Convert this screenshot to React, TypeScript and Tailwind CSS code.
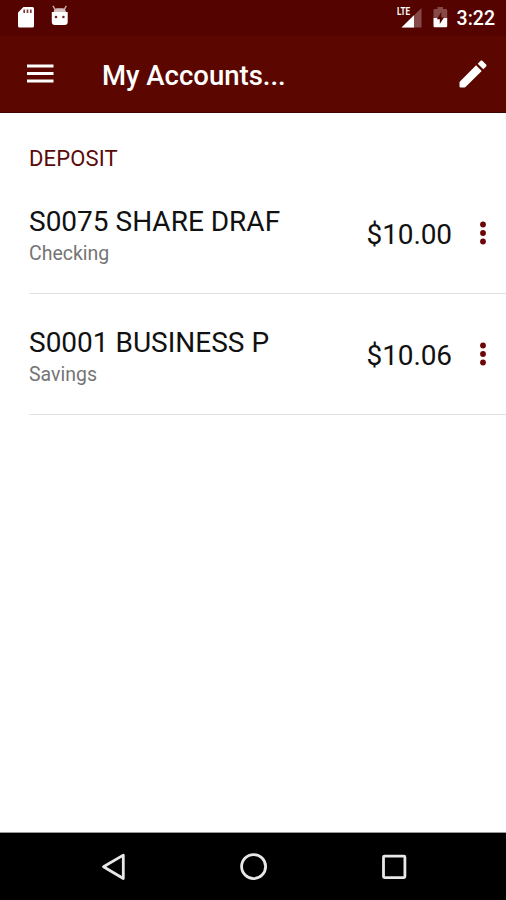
const accounts = [
  { name: 'S0075 SHARE DRAF', type: 'Checking', balance: '$10.00' },
  { name: 'S0001 BUSINESS P', type: 'Savings', balance: '$10.06' },
]

function StatusBar() {
  return (
    <div className="flex h-9 items-start bg-[#540300] pl-[18px] pr-[11px] text-white">
      {/* SD card */}
      <svg width="16" height="21" viewBox="0 0 16 21" className="mt-[7px]">
        <path d="M5.5 0H14.5Q16 0 16 1.5V19Q16 20.5 14.5 20.5H1.5Q0 20.5 0 19V5.5Z" fill="#fff" />
        <path d="M6.2 2.5V6M9.5 2.5V6M12.8 2.5V6" stroke="#7a3c3a" strokeWidth="1.7" />
      </svg>
      {/* debug droid */}
      <svg width="18" height="21" viewBox="0 0 18 21" className="ml-[17px] mt-[5px]">
        <path d="M2 .8L4.3 5M15.3 .8L13 5" stroke="#c9aead" strokeWidth="1.4" />
        <path d="M2.6 7Q3.2 3.2 6 3.2H11.5Q14.4 3.2 15 7Z" fill="#d6c0bf" />
        <path d="M.8 7H16.7V17Q16.7 20 13.7 20H3.8Q.8 20 .8 17Z" fill="#fff" />
        <circle cx="5" cy="12" r="1.3" fill="#6b2826" />
        <circle cx="12.4" cy="12" r="1.3" fill="#6b2826" />
      </svg>

      <div className="relative ml-auto mt-[7px] h-[21px] w-[26px]">
        <svg width="26" height="21" viewBox="0 0 26 21">
          <path d="M25.5 1V20.5H5.5Z" fill="#854a48" />
          <path d="M18 8.3V20.5H5.5Z" fill="#fff" />
        </svg>
        <span className="absolute left-px top-0 origin-left scale-x-[.74] bg-[#540300] text-[11px] font-bold leading-[10px]">
          LTE
        </span>
      </div>
      <svg width="15" height="21" viewBox="0 0 15 21" className="ml-[11px] mt-[7px]">
        <path d="M4.5 0H10V2H13Q14.2 2 14.2 3.2V11H.5V3.2Q.5 2 1.7 2H4.5Z" fill="#854a48" />
        <path d="M.5 11H14.2V19Q14.2 20.2 13 20.2H1.7Q.5 20.2 .5 19Z" fill="#fff" />
        <path d="M8.3 5L3.8 12.3H6.8V17L11 10.4H8.3Z" fill="#540300" />
      </svg>
      <span className="ml-[9px] mt-[7px] text-[19.5px] font-medium leading-6">3:22</span>
    </div>
  )
}

function Header() {
  return (
    <header className="flex h-[77px] items-center border-b border-[#3f0505] bg-[#5b0700] pl-[27px] pr-[15px] text-white">
      <button aria-label="Menu">
        <svg width="27" height="19" viewBox="0 0 27 19" className="-mt-px">
          <path d="M0 2H26.5M0 9.5H26.5M0 17H26.5" stroke="#fff" strokeWidth="3.2" />
        </svg>
      </button>
      <h1 className="ml-12 mt-[3px] text-[27.5px] font-medium leading-8">My Accounts...</h1>
      <button aria-label="Edit" className="ml-auto">
        <svg width="36" height="36" viewBox="0 0 24 24" fill="#fff" className="-mt-px">
          <path d="M3.3 17Q3 17.3 3 17.7V20.3Q3 21 3.7 21H6.3Q6.7 21 7 20.7L17.81 9.94l-3.75-3.75zM20.71 7.04c.39-.39.39-1.02 0-1.41l-2.34-2.34c-.39-.39-1.02-.39-1.41 0l-1.83 1.83 3.75 3.75 1.83-1.83z" />
        </svg>
      </button>
    </header>
  )
}

function AccountRow({ name, type, balance }: (typeof accounts)[number]) {
  return (
    <li className="flex h-[121px] items-start border-b border-[#e2e2e2] pr-[19px]">
      <div className="mt-[33px]">
        <div className="text-[28px] leading-8 text-[#111]">{name}</div>
        <div className="text-[19.5px] leading-8 text-[#757575]">{type}</div>
      </div>
      <div className="ml-auto mt-[46px] text-[28px] leading-8 tracking-[-.1px] text-[#111]">{balance}</div>
      <button aria-label="More" className="ml-[27px] mt-[48px]">
        <svg width="8" height="24" viewBox="0 0 8 24" fill="#6b0508">
          <circle cx="4" cy="3.5" r="2.9" />
          <circle cx="4" cy="12" r="2.9" />
          <circle cx="4" cy="20.5" r="2.9" />
        </svg>
      </button>
    </li>
  )
}

function NavBar() {
  return (
    <nav className="h-[67px] bg-black">
      <svg width="506" height="67" viewBox="0 0 506 67" fill="none" stroke="#e8e8e8" strokeWidth="2.8" strokeLinejoin="round">
        <path d="M103.5 33.8L123.3 22.1V45.5Z" />
        <circle cx="253.6" cy="33.6" r="12" />
        <rect x="383.5" y="23.2" width="21.4" height="21.4" rx="1" />
      </svg>
    </nav>
  )
}

export default function App() {
  return (
    <div className="flex h-[900px] w-[506px] flex-col overflow-hidden bg-white font-['Roboto',sans-serif]">
      <StatusBar />
      <Header />
      <main className="flex-1 border-b border-[#999] pl-[29px]">
        <h2 className="mt-8 text-[22px] leading-7 tracking-[.15px] text-[#5b0a0a]">DEPOSIT</h2>
        <ul>
          {accounts.map((account) => (
            <AccountRow key={account.name} {...account} />
          ))}
        </ul>
      </main>
      <NavBar />
    </div>
  )
}
